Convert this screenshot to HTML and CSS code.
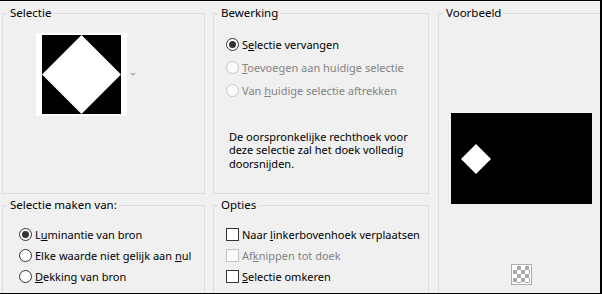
FILE: index.html
```html
<!DOCTYPE html>
<html lang="nl">
<head>
    <meta charset="UTF-8">
    <title>Selectie uit masker</title>
    <link rel="stylesheet" href="styles.css">
</head>
<body>
    <div class="dialog">
        <fieldset class="group">
            <legend>Selectie</legend>
            <div class="thumb-row">
                <div class="thumb">
                    <svg width="79" height="79" viewBox="0 0 79 79">
                        <rect width="79" height="79" fill="#000"/>
                        <polygon points="39.5,0 79,39.5 39.5,79 0,39.5" fill="#fff"/>
                    </svg>
                </div>
                <span class="drop-arrow"></span>
            </div>
        </fieldset>

        <fieldset class="group">
            <legend>Bewerking</legend>
            <div class="choices">
                <label class="choice"><span class="radio on"></span><span>S<u>e</u>lectie vervangen</span></label>
                <label class="choice off"><span class="radio"></span><span><u>T</u>oevoegen aan huidige selectie</span></label>
                <label class="choice off"><span class="radio"></span><span>Van <u>h</u>uidige selectie aftrekken</span></label>
            </div>
            <p class="note">De oorspronkelijke rechthoek voor<br>deze selectie zal het doek volledig<br>doorsnijden.</p>
        </fieldset>

        <fieldset class="group preview">
            <legend>Voorbeeld</legend>
            <svg class="preview-img" width="141" height="91" viewBox="0 0 141 91">
                <rect width="141" height="91" fill="#000"/>
                <polygon points="25,31 40,46 25,61 10,46" fill="#fff"/>
            </svg>
            <span class="checker"><span></span></span>
        </fieldset>

        <fieldset class="group">
            <legend>Selectie maken van:</legend>
            <div class="choices src">
                <label class="choice"><span class="radio on"></span><span>L<u>u</u>minantie van bron</span></label>
                <label class="choice"><span class="radio"></span><span>Elke waarde niet gelijk aan <u>n</u>ul</span></label>
                <label class="choice"><span class="radio"></span><span><u>D</u>ekking van bron</span></label>
            </div>
        </fieldset>

        <fieldset class="group">
            <legend>Opties</legend>
            <div class="choices src opt">
                <label class="choice"><span class="check"></span><span>Naar <u>l</u>inkerbovenhoek verplaatsen</span></label>
                <label class="choice off"><span class="check"></span><span>Af<u>k</u>nippen tot doek</span></label>
                <label class="choice"><span class="check"></span><span><u>S</u>electie omkeren</span></label>
            </div>
        </fieldset>
    </div>
</body>
</html>
```

FILE: styles.css
```css
html, body {
    margin: 0;
    background: #f0f0f0;
}
body {
    font-family: "Noto Sans", "Open Sans", sans-serif;
    font-size: 11px;
    color: #000;
}
.dialog {
    box-sizing: border-box;
    width: 602px;
    height: 294px;
    padding: 5px 0 0 2px;
    border-top: 1px solid #000;
    border-right: 2px solid #000;
    border-bottom: 1px solid #000;
    overflow: hidden;
    display: grid;
    grid-template-columns: 203px 216px 170px;
    grid-template-rows: 188px 100px;
    column-gap: 8px;
    row-gap: 4px;
}
.group {
    margin: 0;
    padding: 0;
    min-width: 0;
    border: 1px solid #dcdcdc;
}
.group legend {
    margin-left: 4px;
    padding: 0 2px 0 3px;
    line-height: 14px;
    font-size: 11.5px;
}
.preview {
    grid-column: 3;
    grid-row: 1 / span 2;
    margin-left: 1px;
}

/* Selectie */
.thumb-row {
    display: flex;
    align-items: center;
    margin: 13px 0 0 33px;
}
.thumb {
    background: #fff;
    padding: 2px 6px;
    line-height: 0;
}
.drop-arrow {
    margin-left: 3px;
    border-left: 3px solid transparent;
    border-right: 3px solid transparent;
    border-top: 3px solid #b4b4b4;
}

/* radio and check rows */
.choices {
    display: flex;
    flex-direction: column;
    margin: 13px 0 0 12px;
}
.choice {
    display: flex;
    align-items: center;
    height: 23px;
    white-space: nowrap;
}
.src {
    margin: 12px 0 0 16px;
}
.src .choice {
    height: 21px;
}
.opt {
    margin-left: 12px;
}
.choice.off {
    color: #838383;
}
.radio, .check {
    box-sizing: border-box;
    flex: none;
    width: 13px;
    height: 13px;
    margin-right: 3px;
    border: 1px solid #333;
    background: #fff;
    display: flex;
    align-items: center;
    justify-content: center;
}
.radio {
    border-radius: 50%;
}
.radio.on::after {
    content: "";
    width: 7px;
    height: 7px;
    border-radius: 50%;
    background: #333;
}
.off .radio, .off .check {
    border-color: #c4c4c4;
    background: #fbfbfb;
}
.note {
    margin: 28px 0 0 15px;
    line-height: 13.4px;
}

/* Voorbeeld */
.preview-img {
    display: block;
    margin: 93px 0 0 12px;
}
.checker {
    display: block;
    box-sizing: border-box;
    width: 21px;
    height: 21px;
    margin: 60px 0 0 72px;
    padding: 1px;
    border: 1px solid #adadad;
    background: #fff;
}
.checker span {
    display: block;
    width: 100%;
    height: 100%;
    background-color: #fff;
    background-image:
        linear-gradient(45deg, #a9a9a9 25%, transparent 25%, transparent 75%, #a9a9a9 75%),
        linear-gradient(45deg, #a9a9a9 25%, transparent 25%, transparent 75%, #a9a9a9 75%);
    background-size: 8px 8px;
    background-position: 0 0, 4px 4px;
}
```
